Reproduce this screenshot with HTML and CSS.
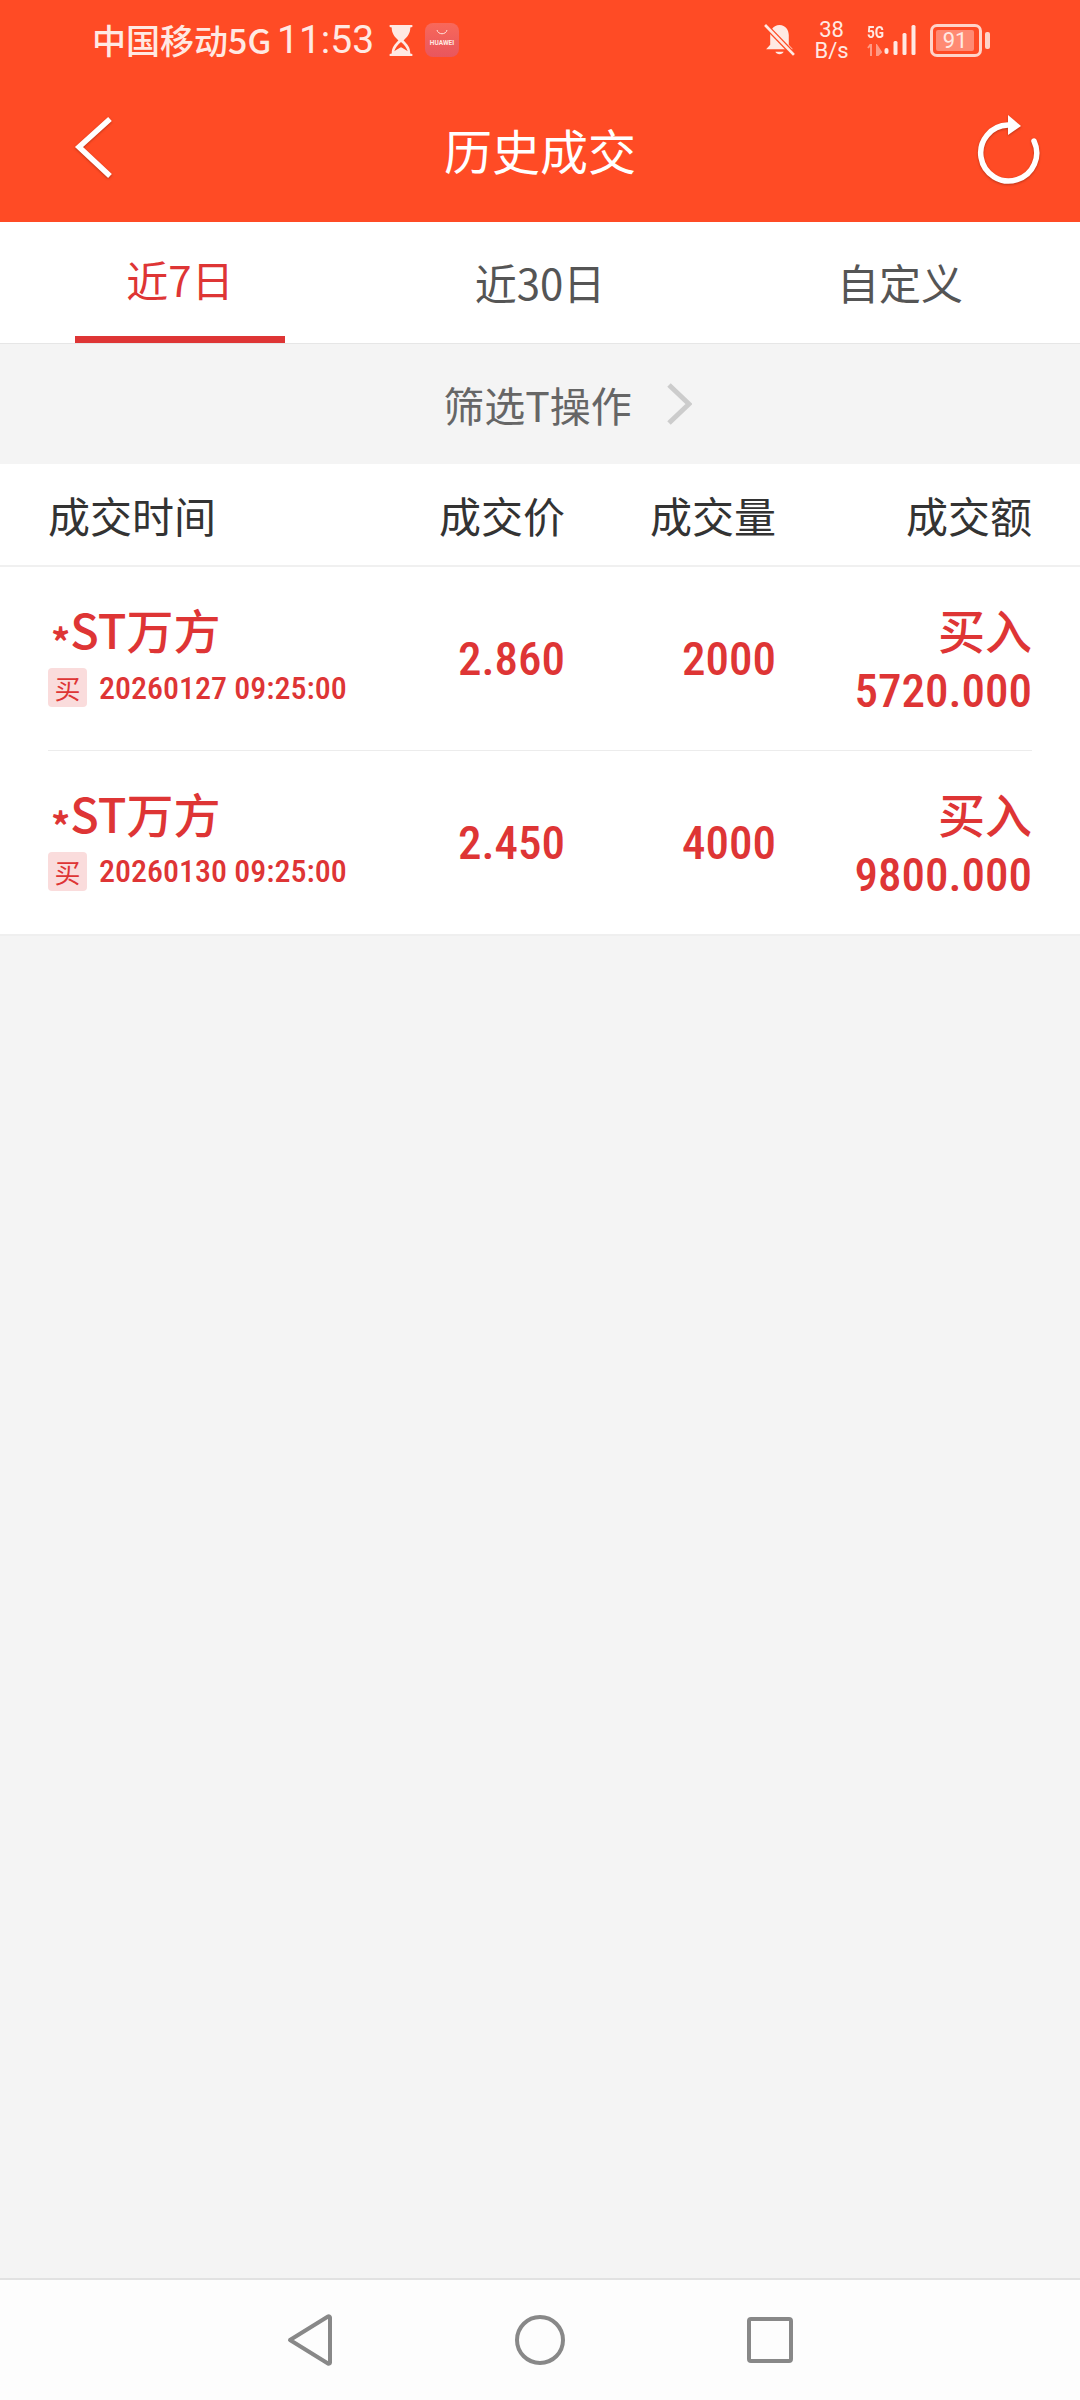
FILE: index.html
```html
<!DOCTYPE html>
<html lang="zh-CN">
<head>
<meta charset="utf-8">
<title>历史成交</title>
<link rel="stylesheet" href="styles.css">
</head>
<body>
<div class="app">
  <header class="header">
    <div class="status">
      <div class="status-group">
        <span class="carrier">中国移动5G</span>
        <span class="clock">11:53</span>
        <svg class="ic-hourglass" viewBox="0 0 22 30"><path d="M0 0h22v2l-2 .5c0 6-3 9-6.500 12.500 3.500 3.500 6.500 6.500 6.500 12.500l2 .5v2H0v-2l2-.5C2 21.500 5 18.500 8.500 15 5 11.500 2 8.500 2 2.500L0 2z" fill="#ffe9e3"/><path d="M11 16.500C8 19 5.500 22 4.500 25.500 7 23.500 9 22.500 11 21.500c2 1 4 2 6.500 4C16.500 22 14 19 11 16.500z" fill="#ff4b25"/></svg>
        <svg class="ic-store" viewBox="0 0 34 34"><defs><linearGradient id="storeg" x1="0" y1="0" x2="0" y2="1"><stop offset="0" stop-color="#f8685a"/><stop offset="1" stop-color="#e8565e"/></linearGradient></defs><rect width="34" height="34" rx="8" fill="url(#storeg)"/><path d="M12 7c1 5 9 5 10 0" fill="none" stroke="#ffe0da" stroke-width="1"/><text x="17" y="22" class="store-text" text-anchor="middle">HUAWEI</text></svg>
      </div>
      <div class="status-group">
        <svg class="ic-bell" viewBox="0 0 30 32"><path d="M15 1c6 0 9 5 9 10v9l4 4.500H2L6 20v-9c0-5 3-10 9-10z" fill="#ffe9e3"/><path d="M11 27c1 3 7 3 8 0z" fill="#ffe9e3"/><path d="M1 1l28 29" stroke="#ff4b25" stroke-width="5"/><path d="M1 1l28 29" stroke="#ffe9e3" stroke-width="2.600"/></svg>
        <div class="speed"><span>38</span><span>B/s</span></div>
        <div class="signal">
          <div class="net"><span class="net-label">5G</span><svg class="ic-arrows" viewBox="0 0 15 12"><path d="M4 0v12M1 4l3-4M10 12V2l4 6z" stroke="#ff9a85" stroke-width="2" fill="#ff9a85"/></svg></div>
          <svg class="ic-bars" viewBox="0 0 32 32"><g fill="#ffe9e3"><rect x="0" y="24" width="4" height="6" rx="2"/><rect x="9" y="17" width="4" height="14" rx="1.500"/><rect x="18" y="9" width="4" height="22" rx="1.500"/><rect x="27" y="1" width="4" height="30" rx="1.500"/></g></svg>
        </div>
        <div class="battery">
          <div class="battery-body"><div class="battery-fill">91</div></div>
          <div class="battery-nub"></div>
        </div>
      </div>
    </div>
    <div class="toolbar">
      <svg class="ic-side" viewBox="0 0 96 100"><path d="M80 19 49 47l31 29" fill="none" stroke="#fff" stroke-width="5.500"/></svg>
      <h1 class="title">历史成交</h1>
      <svg class="ic-side" viewBox="0 0 96 100"><path d="M80 41A28 28 0 1 1 54 25" fill="none" stroke="#fff" stroke-width="5.500" stroke-linecap="round"/><path d="M54 15 67 26 54 35z" fill="#fff"/></svg>
    </div>
  </header>

  <nav class="tabs">
    <div class="tab tab-active">近7日</div>
    <div class="tab">近30日</div>
    <div class="tab">自定义</div>
  </nav>

  <div class="filter">
    <span>筛选T操作</span>
    <svg class="ic-chevron" viewBox="0 0 26 44"><path d="M3 3l20 19L3 41" fill="none" stroke="#ccc" stroke-width="5"/></svg>
  </div>

  <section class="table">
    <div class="grid head">
      <div>成交时间</div>
      <div class="r">成交价</div>
      <div class="r">成交量</div>
      <div class="r">成交额</div>
    </div>
    <div class="rows">
      <div class="grid row">
        <div class="who">
          <div class="name"><span class="star">*</span>ST万方</div>
          <div class="meta"><span class="tag">买</span><span class="time num">20260127 09:25:00</span></div>
        </div>
        <div class="r num big">2.860</div>
        <div class="r num big">2000</div>
        <div class="r amount">
          <div class="side">买入</div>
          <div class="num big">5720.000</div>
        </div>
      </div>
      <div class="grid row">
        <div class="who">
          <div class="name"><span class="star">*</span>ST万方</div>
          <div class="meta"><span class="tag">买</span><span class="time num">20260130 09:25:00</span></div>
        </div>
        <div class="r num big">2.450</div>
        <div class="r num big">4000</div>
        <div class="r amount">
          <div class="side">买入</div>
          <div class="num big">9800.000</div>
        </div>
      </div>
    </div>
  </section>

  <div class="spacer"></div>

  <footer class="navbar">
    <svg class="ic-nav" viewBox="0 0 56 56"><path d="M8 28 46 4.500c1-.6 2 0 2 1v45c0 1-1 1.600-2 1z" fill="none" stroke="#888" stroke-width="4" stroke-linejoin="round"/></svg>
    <svg class="ic-nav" viewBox="0 0 56 56"><circle cx="28" cy="28" r="23" fill="none" stroke="#888" stroke-width="4"/></svg>
    <svg class="ic-nav" viewBox="0 0 56 56"><rect x="7" y="7" width="42" height="42" rx="2" fill="none" stroke="#888" stroke-width="4"/></svg>
  </footer>
</div>
</body>
</html>
```

FILE: styles.css
```css
* { box-sizing: border-box; }
html, body { margin: 0; padding: 0; }
body {
  width: 1080px;
  height: 2400px;
  background: #f4f4f4;
  font-family: "Noto Sans CJK SC", "Noto Sans", sans-serif;
  overflow: hidden;
}
.app { display: flex; flex-direction: column; height: 2400px; }

.header { height: 222px; background: #ff4b25; flex: none; }
.status {
  height: 80px;
  padding: 20px 90px 0 92px;
  display: flex;
  justify-content: space-between;
  align-items: flex-start;
  color: #ffe9e3;
}
.status-group { display: flex; align-items: flex-start; }
.carrier { font-size: 34px; font-weight: 500; line-height: 40px; width: 185px; white-space: nowrap; }
.clock { font-family: Roboto, sans-serif; font-size: 39px; line-height: 40px; width: 112px; }
.ic-hourglass { width: 24px; height: 31px; margin-top: 5px; margin-right: 12px; }
.ic-store { width: 34px; height: 34px; margin-top: 3px; }
.store-text { font-family: Roboto, sans-serif; font-size: 6.500px; font-weight: 700; fill: #ffe9e3; }
.ic-bell { width: 31px; height: 33px; margin-top: 4px; margin-right: 19px; }
.speed { display: flex; flex-direction: column; align-items: center; width: 35px; font-family: Roboto, sans-serif; font-size: 22px; line-height: 21px; margin-top: -1px; margin-right: 18px; }
.signal { display: flex; align-items: flex-start; width: 51px; margin-right: 12px; margin-top: 4px; }
.net { width: 17px; display: flex; flex-direction: column; }
.net-label { font-family: Roboto, sans-serif; font-size: 17px; line-height: 16px; font-weight: 700; transform: scaleX(.8); transform-origin: left; }
.ic-arrows { width: 15px; height: 12px; margin-top: 4px; }
.ic-bars { width: 33px; height: 32px; }
.battery { display: flex; align-items: center; margin-top: 4px; }
.battery-body { width: 52px; height: 33px; border: 3px solid #ffd4c9; border-radius: 7px; padding: 3px; }
.battery-fill { width: 38px; height: 21px; background: #ff8a73; border-radius: 2px; color: #ffe9e3; font-family: Roboto, sans-serif; font-size: 22px; line-height: 21px; text-align: center; }
.battery-nub { width: 5px; height: 17px; margin-left: 3px; background: #ffd4c9; border-radius: 2px; }

.toolbar { height: 142px; display: flex; align-items: flex-start; padding: 20px 30px 0; }
.ic-side { width: 96px; height: 100px; flex: none; filter: drop-shadow(0 1px 1px rgba(120, 30, 10, .5)); }
.title { flex: 1; margin: 0; text-align: center; font-size: 48px; line-height: 64px; font-weight: 400; color: #fff; padding-top: 17px; }

.tabs { height: 122px; flex: none; display: grid; grid-template-columns: repeat(3, 1fr); background: #fff; border-bottom: 1px solid #e6e6e6; }
.tab { text-align: center; font-size: 42px; line-height: 56px; padding-top: 32px; color: #555; }
.tab-active { color: #de3535; width: 210px; margin-left: 75px; height: 121px; border-bottom: 7px solid #de3535; padding-top: 29px; }

.filter { height: 120px; flex: none; display: flex; align-items: center; justify-content: center; gap: 34px; font-size: 41px; color: #666; padding-left: 55px; }
.ic-chevron { width: 26px; height: 44px; }

.table { background: #fff; flex: none; }
.grid { display: grid; grid-template-columns: 352px 165px 211px 256px; padding: 0 48px; align-items: center; }
.r { text-align: right; }
.head { height: 103px; font-size: 42px; color: #333; border-bottom: 2px solid #f0f0f0; }
.rows { border-bottom: 2px solid #efefef; }
.row { height: 183px; color: #de3535; position: relative; }
.row:first-child { height: 184px; }
.row:first-child::after { content: ""; position: absolute; left: 48px; right: 48px; bottom: 0; height: 1px; background: #ececec; }
.who { padding-bottom: 12px; }
.name { font-size: 47px; font-weight: 500; line-height: 60px; white-space: nowrap; }
.star { font-size: 38px; font-weight: 700; line-height: 0; vertical-align: -8px; margin-left: 3px; }
.meta { display: flex; align-items: center; gap: 12px; margin-top: 9px; }
.tag { width: 39px; height: 39px; border-radius: 4px; background: #fadcdc; font-size: 26px; line-height: 39px; text-align: center; }
.num { font-family: Roboto, sans-serif; font-stretch: 85%; font-weight: 500; }
.time { font-size: 32px; }
.big { font-size: 47px; line-height: 58px; }
.amount { padding-top: 2px; }
.side { font-size: 47px; font-weight: 500; line-height: 58px; margin-bottom: 4px; }

.spacer { flex: 1; }
.navbar { height: 122px; flex: none; background: #fdfdfd; border-top: 2px solid #e2e2e2; display: flex; justify-content: center; gap: 174px; align-items: center; }
.ic-nav { width: 56px; height: 56px; }
```
